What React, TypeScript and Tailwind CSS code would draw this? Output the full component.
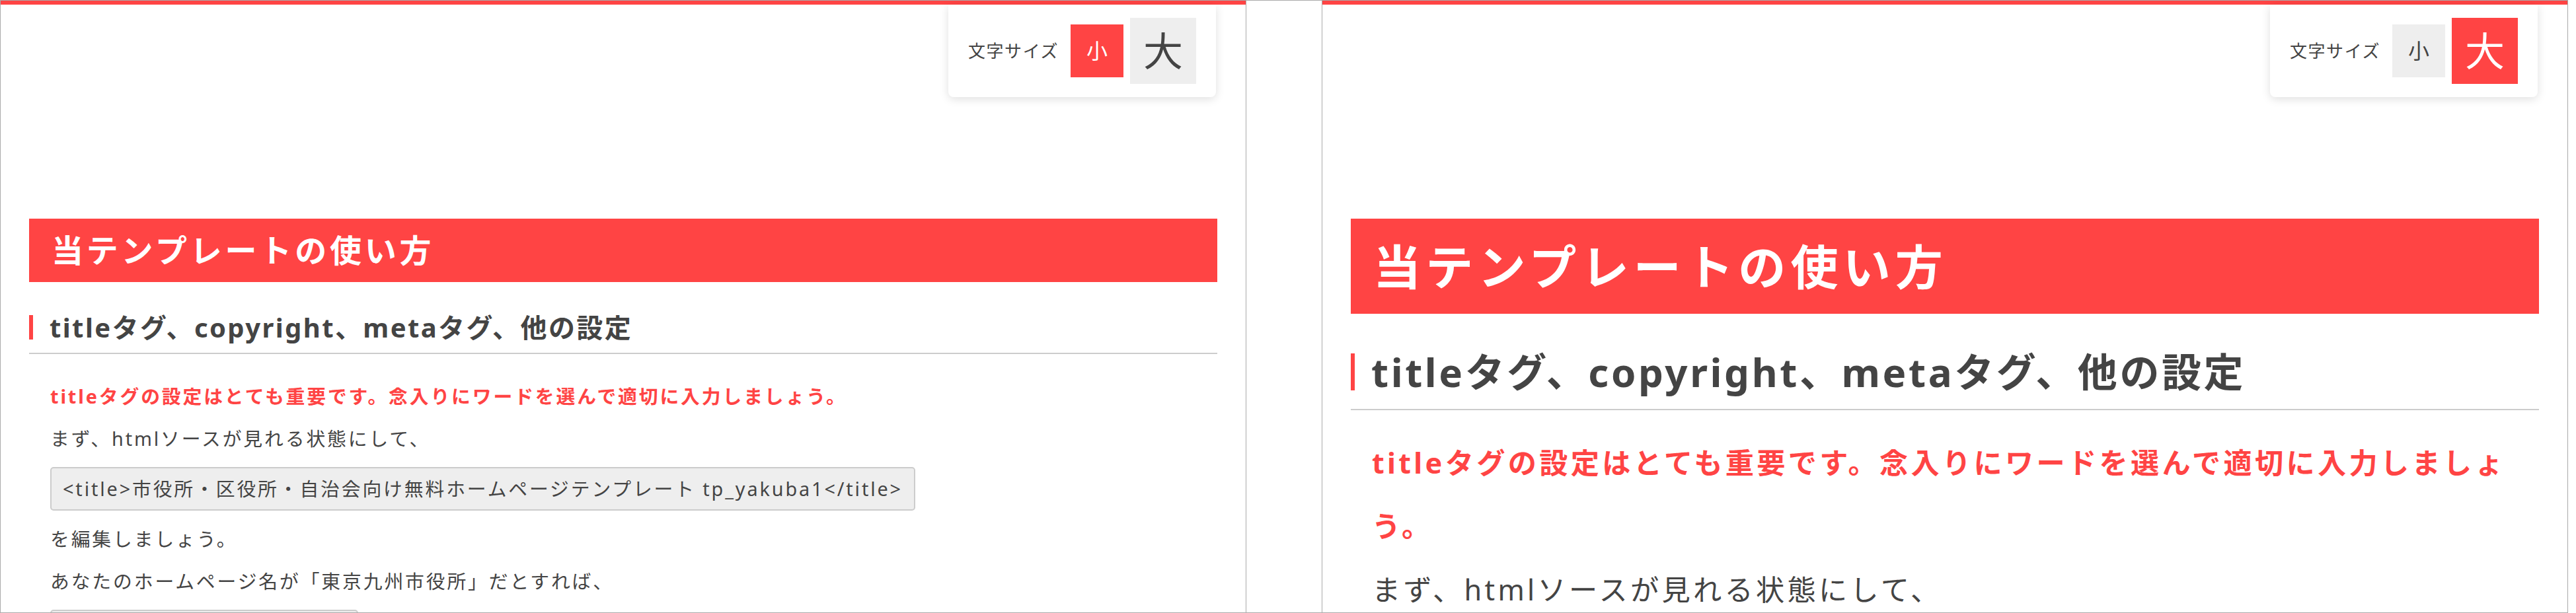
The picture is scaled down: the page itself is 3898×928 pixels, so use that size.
import clsx from "clsx";

function SizeSwitch({ large }: { large: boolean }) {
  return (
    <div className="flex items-center rounded-b-[8px] bg-white px-[30px] py-[20px] shadow-[0_3px_14px_rgba(0,0,0,0.13)]">
      <span className="text-[26px] leading-none tracking-[0.06em] text-[#444]">文字サイズ</span>
      <span
        className={clsx(
          "ml-[18px] flex h-[80px] w-[80px] items-center justify-center text-[32px] leading-none",
          large ? "bg-[#eee] text-[#444]" : "bg-[#ff4444] text-white"
        )}
      >
        小
      </span>
      <span
        className={clsx(
          "ml-[10px] flex h-[100px] w-[100px] items-center justify-center text-[60px] leading-none",
          large ? "bg-[#ff4444] text-white" : "bg-[#eee] text-[#444]"
        )}
      >
        大
      </span>
    </div>
  );
}

function Panel({ large }: { large: boolean }) {
  return (
    <div className="h-[928px] w-[1886px] shrink-0 overflow-hidden border border-[#aaa] bg-white">
      {/* top accent */}
      <div className="h-[6px] bg-[#ff4444]" />

      <div className="flex justify-end pr-[45px]">
        <SizeSwitch large={large} />
      </div>

      <div className="px-[43px]">
        <h2
          className={clsx(
            "mt-[184px] bg-[#ff4444] pl-[34px] font-bold tracking-[0.1em] text-white",
            large ? "py-[20px] text-[72px] leading-[104px]" : "py-[14px] text-[48px] leading-[68px]"
          )}
        >
          当テンプレートの使い方
        </h2>

        <h3
          className={clsx(
            "border-b-2 border-[#ccc]",
            large ? "mt-[60px] pb-[28px]" : "mt-[50px] pb-[20px]"
          )}
        >
          <span
            className={clsx(
              "block border-l-[6px] border-[#ff4444] pl-[25px] font-bold tracking-[0.06em] text-[#444]",
              large ? "text-[60px] leading-[56px]" : "text-[40px] leading-[37px]"
            )}
          >
            titleタグ、copyright、metaタグ、他の設定
          </span>
        </h3>

        <div
          className={clsx(
            "mt-[32px] px-[32px] tracking-[0.1em] text-[#444]",
            large ? "text-[43.2px] leading-[96px]" : "text-[28.8px] leading-[64px]"
          )}
        >
          <p className="font-bold text-[#ff4444]">
            titleタグの設定はとても重要です。念入りにワードを選んで適切に入力しましょう。
          </p>
          <p>まず、htmlソースが見れる状態にして、</p>
          <div className="my-[11px] w-fit whitespace-nowrap rounded-[5px] border-2 border-[#ccc] bg-[#eee] px-[17px] py-[8px] leading-[46px]">
            &lt;title&gt;市役所・区役所・自治会向け無料ホームページテンプレート tp_yakuba1&lt;/title&gt;
          </div>
          <p>を編集しましょう。</p>
          <p>あなたのホームページ名が「東京九州市役所」だとすれば、</p>
          <div className="my-[11px] w-[466px] overflow-hidden whitespace-nowrap rounded-[5px] border-2 border-[#ccc] bg-[#eee] px-[17px] py-[8px] leading-[46px]">
            &lt;title&gt;東京九州市役所&lt;/title&gt;
          </div>
        </div>
      </div>
    </div>
  );
}

export default function App() {
  return (
    <div className="flex h-[928px] w-[3898px] bg-white font-['Noto_Sans','Noto_Sans_CJK_JP',sans-serif]">
      <Panel large={false} />
      <div className="h-[928px] w-[114px] shrink-0 border-y border-[#aaa]" />
      <Panel large />
    </div>
  );
}
